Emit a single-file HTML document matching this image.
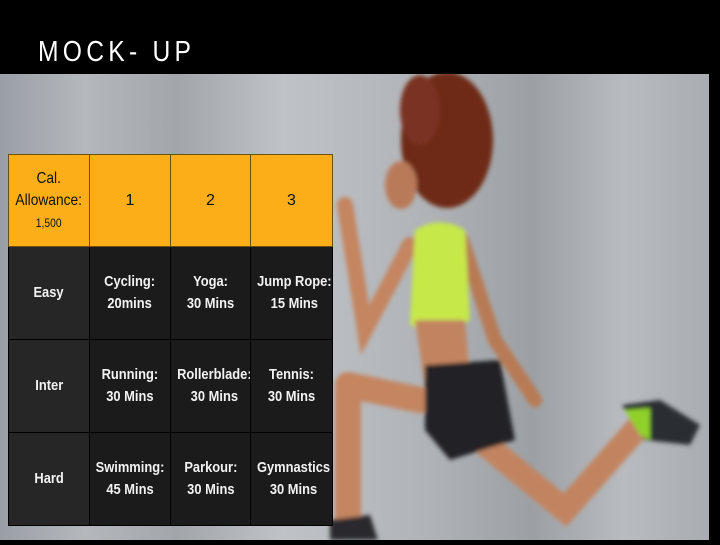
<!DOCTYPE html>
<html><head><meta charset="utf-8"><style>
*{margin:0;padding:0;box-sizing:border-box}
html,body{width:720px;height:540px}
body{background:#000;position:relative;overflow:hidden;font-family:"Liberation Sans",sans-serif}
.title{position:absolute;left:38px;top:36px;color:#fff;font-size:29px;letter-spacing:5px;font-weight:normal;transform:scaleX(0.85);transform-origin:left;white-space:nowrap}
.photo{position:absolute;left:0;top:74px;width:709px;height:466px;background:linear-gradient(90deg,#9a9fa5 0%,#b4b8bd 12%,#a2a6ab 25%,#bfc2c6 40%,#b0b3b7 60%,#9ca0a4 75%,#b8bbbf 88%,#a9acb0 100%)}
table{position:absolute;left:8px;top:154px;border-collapse:collapse;width:324px;table-layout:fixed}
td{text-align:center;vertical-align:middle;font-size:15px;line-height:22px;font-weight:bold;white-space:nowrap;overflow:hidden;padding:0}
td span.n{display:inline-block;transform:scaleX(0.86);transform-origin:center}
tr.h td{background:#fbae17;color:#111;height:92px;border:1px solid #6b5010;font-weight:normal;font-size:16px}
tr.r td{background:#1b1b1b;color:#f2f2f2;height:93px;border:1px solid #000}
tr.r td:first-child{background:#262626}
.s{font-size:12px}
</style></head><body>
<div class="title">MOCK- UP</div>
<div class="photo">
<svg width="709" height="466" viewBox="0 74 709 466">
<defs><filter id="b"><feGaussianBlur stdDeviation="2"/></filter></defs>
<g filter="url(#b)">
<ellipse cx="447" cy="140" rx="46" ry="68" fill="#6e2a18"/>
<ellipse cx="420" cy="110" rx="20" ry="35" fill="#7a3020"/>
<ellipse cx="401" cy="185" rx="16" ry="24" fill="#b97a5a"/>
<path d="M410 245 L365 330 L345 205" stroke="#c48560" stroke-width="16" fill="none" stroke-linecap="round"/>
<path d="M462 240 L495 340 L535 400" stroke="#b87a55" stroke-width="14" fill="none" stroke-linecap="round"/>
<path d="M415 230 Q440 215 465 230 L470 320 Q440 335 410 325 Z" fill="#c6e84a"/>
<path d="M415 320 L465 320 L470 380 L425 385 Z" fill="#c28460"/>
<path d="M348 385 L420 400 M348 385 L348 520" stroke="#c48560" stroke-width="26" fill="none" stroke-linecap="round"/>
<path d="M480 440 L565 510 L640 425" stroke="#c28460" stroke-width="24" fill="none" stroke-linecap="round"/>
<path d="M425 365 L500 360 L515 440 L450 460 L425 430 Z" fill="#222326"/>
<path d="M622 405 L660 400 L700 425 L690 445 L645 440 Z" fill="#2c2f33"/>
<path d="M625 410 L650 408 L650 440 L640 435 Z" fill="#8fd12c"/>
<path d="M330 520 L370 515 L378 540 L330 540 Z" fill="#2a2c2e"/>
</g>
</svg>
</div>
<table>
<colgroup><col style="width:81px"><col style="width:81px"><col style="width:80px"><col style="width:82px"></colgroup>
<tr class="h"><td><span class="n">Cal.<br>Allowance:<br><span class="s">1,500</span></span></td><td>1</td><td>2</td><td>3</td></tr>
<tr class="r"><td><span class="n">Easy</span></td><td><span class="n">Cycling:<br>20mins</span></td><td><span class="n">Yoga:<br>30 Mins</span></td><td><span class="n">Jump Rope:<br>15 Mins</span></td></tr>
<tr class="r"><td><span class="n">Inter</span></td><td><span class="n">Running:<br>30 Mins</span></td><td><span class="n">Rollerblade:<br>30 Mins</span></td><td><span class="n">Tennis:<br>30 Mins</span></td></tr>
<tr class="r"><td><span class="n">Hard</span></td><td><span class="n">Swimming:<br>45 Mins</span></td><td><span class="n">Parkour:<br>30 Mins</span></td><td><span class="n">Gymnastics<br>30 Mins</span></td></tr>
</table>
</body></html>
